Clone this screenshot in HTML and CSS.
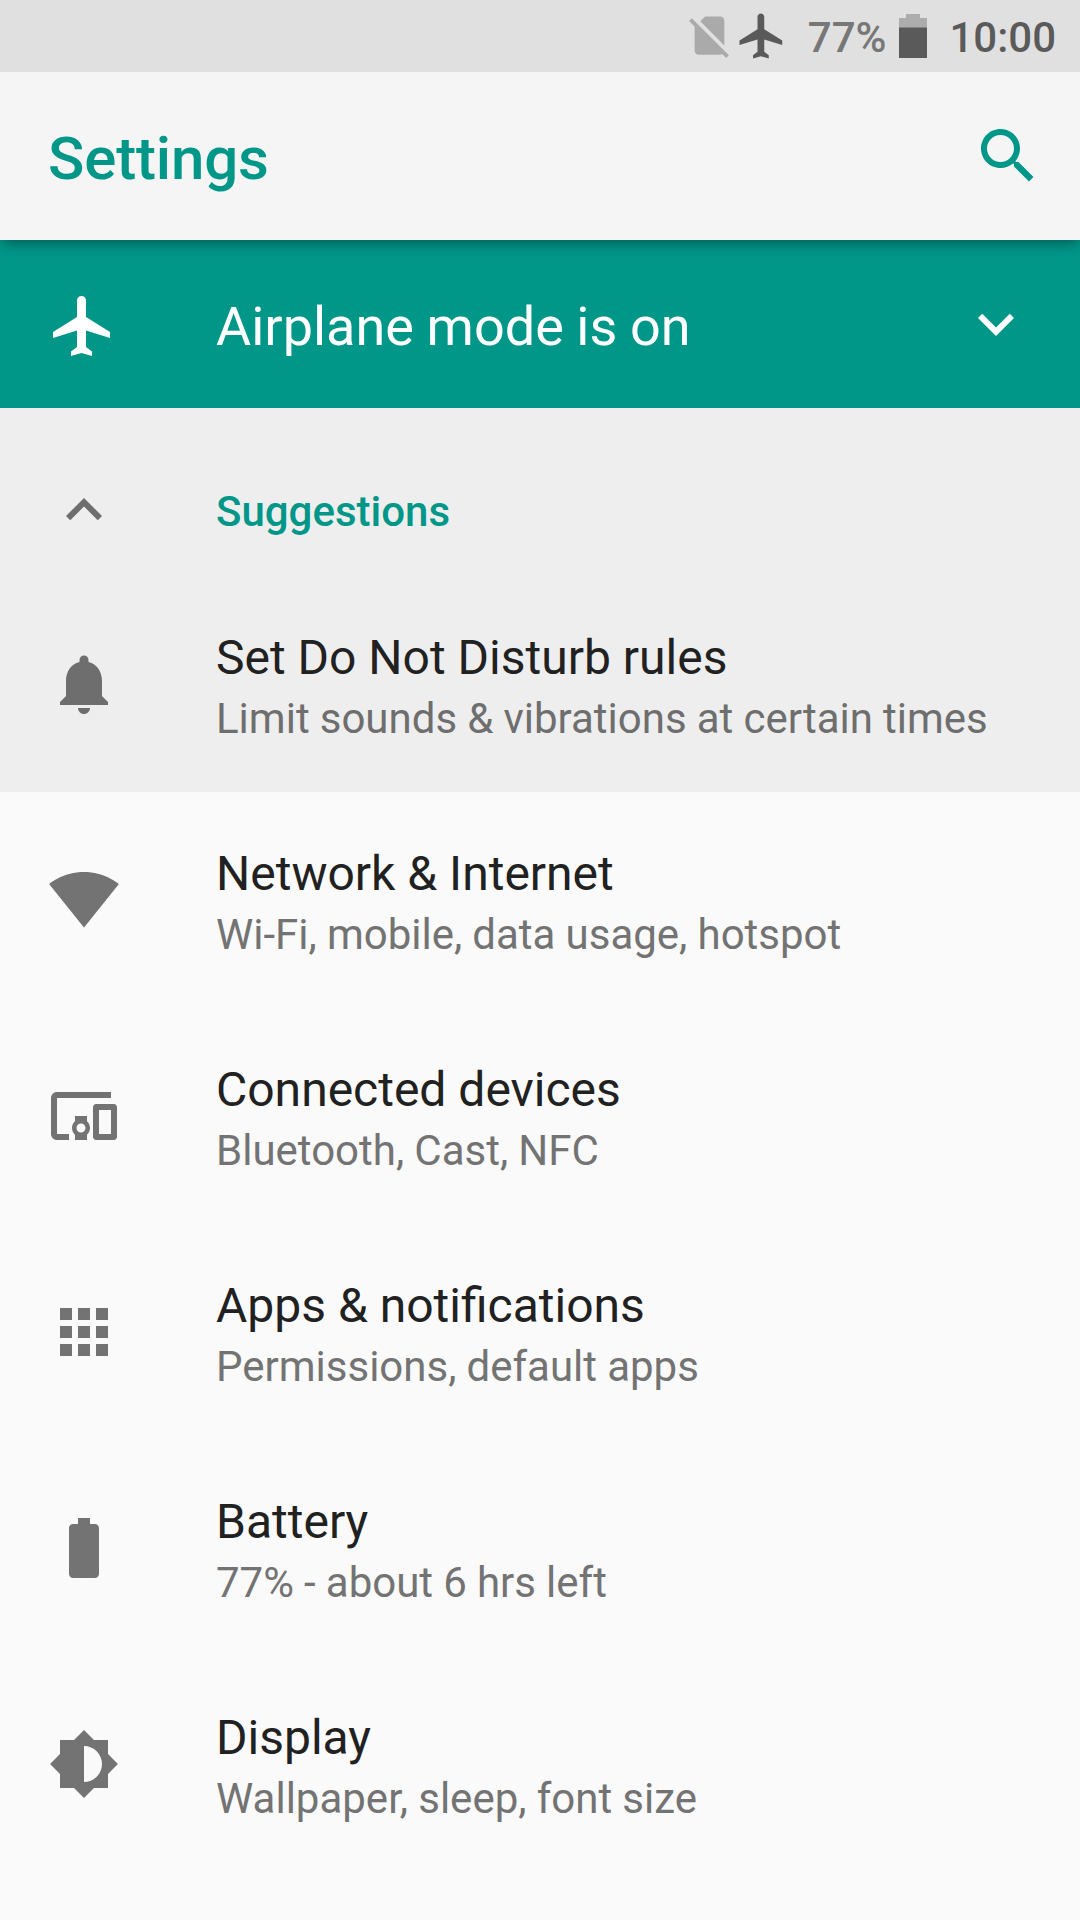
FILE: index.html
```html
<!DOCTYPE html>
<html lang="en">
<head>
<meta charset="utf-8">
<title>Settings</title>
<link rel="stylesheet" href="styles.css">
</head>
<body>
<div class="screen">
  <div class="status-bar">
    <svg class="status-sim" viewBox="0 0 24 24"><path d="M18.99 5c0-1.1-.89-2-1.99-2h-7L7.66 5.34 19 16.68 18.99 5zM3.65 3.88L2.38 5.15 5 7.77V19c0 1.1.9 2 2 2h10.01c.35 0 .67-.1.96-.26l1.88 1.88 1.27-1.27L3.65 3.88z"/></svg>
    <svg class="status-plane" viewBox="0 0 24 24"><path d="M21 16v-2l-8-5V3.5c0-.83-.67-1.5-1.5-1.5S10 2.67 10 3.5V9l-8 5v2l8-2.5V19l-2 1.5V22l3.5-1 3.5 1v-1.5L13 19v-5.5l8 2.5z"/></svg>
    <span class="status-percent">77%</span>
    <svg class="status-battery" viewBox="0 0 28 44"><path class="battery-empty" d="M7 0h14v4h7v10H0V4h7z"/><path class="battery-charge" d="M0 13.5h28V44H0z"/></svg>
    <span class="status-clock">10:00</span>
  </div>

  <header class="app-bar">
    <h1 class="app-title">Settings</h1>
    <svg class="icon search" viewBox="0 0 24 24"><path d="M15.5 14h-.79l-.28-.27C15.41 12.59 16 11.11 16 9.5 16 5.91 13.09 3 9.5 3S3 5.91 3 9.5 5.91 16 9.5 16c1.61 0 3.09-.59 4.23-1.57l.27.28v.79l5 4.99L20.49 19l-4.99-5zm-6 0C7.01 14 5 11.99 5 9.5S7.01 5 9.5 5 14 7.01 14 9.5 11.99 14 9.5 14z"/></svg>
  </header>

  <section class="banner">
    <svg class="icon banner-plane" viewBox="0 0 24 24"><path d="M21 16v-2l-8-5V3.5c0-.83-.67-1.5-1.5-1.5S10 2.67 10 3.5V9l-8 5v2l8-2.5V19l-2 1.5V22l3.5-1 3.5 1v-1.5L13 19v-5.5l8 2.5z"/></svg>
    <span class="banner-text">Airplane mode is on</span>
    <svg class="icon" viewBox="0 0 24 24"><path d="M16.59 8.59L12 13.17 7.41 8.59 6 10l6 6 6-6z"/></svg>
  </section>

  <section class="suggestions">
    <div class="suggestions-header">
      <svg class="icon" viewBox="0 0 24 24"><path d="M12 8l-6 6 1.41 1.41L12 10.83l4.59 4.58L18 14z"/></svg>
      <h2 class="suggestions-title">Suggestions</h2>
    </div>
    <div class="row">
      <svg class="icon" viewBox="0 0 24 24"><path d="M12 22c1.1 0 2-.9 2-2h-4c0 1.1.89 2 2 2zm6-6v-5c0-3.07-1.64-5.64-4.5-6.32V4c0-.83-.67-1.5-1.5-1.5s-1.5.67-1.5 1.5v.68C7.63 5.36 6 7.92 6 11v5l-2 2v1h16v-1l-2-2z"/></svg>
      <div class="row-text"><div class="row-title">Set Do Not Disturb rules</div><div class="row-summary">Limit sounds &amp; vibrations at certain times</div></div>
    </div>
  </section>

  <main class="categories">
    <div class="row">
      <svg class="icon" viewBox="0 0 24 24"><path d="M12.01 21.2L23.64 6.7c-.45-.34-4.93-4-11.64-4C5.28 2.7.81 6.36.36 6.7l11.63 14.49.01.01.01-.01z"/></svg>
      <div class="row-text"><div class="row-title">Network &amp; Internet</div><div class="row-summary">Wi-Fi, mobile, data usage, hotspot</div></div>
    </div>
    <div class="row">
      <svg class="icon" viewBox="0 0 24 24"><path d="M3 6h18V4H3c-1.1 0-2 .9-2 2v12c0 1.1.9 2 2 2h4v-2H3V6zm10 6H9v1.78c-.61.55-1 1.33-1 2.22s.39 1.67 1 2.22V20h4v-1.78c.61-.55 1-1.34 1-2.22s-.39-1.67-1-2.22V12zm-2 5.5c-.83 0-1.5-.67-1.5-1.5s.67-1.5 1.5-1.5 1.5.67 1.5 1.5-.67 1.5-1.5 1.5zM22 8h-6c-.5 0-1 .5-1 1v10c0 .5.5 1 1 1h6c.5 0 1-.5 1-1V9c0-.5-.5-1-1-1zm-1 10h-4v-8h4v8z"/></svg>
      <div class="row-text"><div class="row-title">Connected devices</div><div class="row-summary">Bluetooth, Cast, NFC</div></div>
    </div>
    <div class="row">
      <svg class="icon" viewBox="0 0 24 24"><path d="M4 8h4V4H4v4zm6 12h4v-4h-4v4zm-6 0h4v-4H4v4zm0-6h4v-4H4v4zm6 0h4v-4h-4v4zm6-10v4h4V4h-4zm-6 4h4V4h-4v4zm6 6h4v-4h-4v4zm0 6h4v-4h-4v4z"/></svg>
      <div class="row-text"><div class="row-title">Apps &amp; notifications</div><div class="row-summary">Permissions, default apps</div></div>
    </div>
    <div class="row">
      <svg class="icon" viewBox="0 0 24 24"><path d="M15.67 4H14V2h-4v2H8.33C7.6 4 7 4.6 7 5.33v15.33C7 21.4 7.6 22 8.33 22h7.33c.74 0 1.34-.6 1.34-1.33V5.33C17 4.6 16.4 4 15.67 4z"/></svg>
      <div class="row-text"><div class="row-title">Battery</div><div class="row-summary">77% - about 6 hrs left</div></div>
    </div>
    <div class="row">
      <svg class="icon" viewBox="0 0 24 24"><path d="M20 15.31L23.31 12 20 8.69V4h-4.69L12 .69 8.69 4H4v4.69L.69 12 4 15.31V20h4.69L12 23.31 15.31 20H20v-4.69zM12 18V6c3.31 0 6 2.69 6 6s-2.69 6-6 6z"/></svg>
      <div class="row-text"><div class="row-title">Display</div><div class="row-summary">Wallpaper, sleep, font size</div></div>
    </div>
  </main>
</div>
</body>
</html>
```
FILE: styles.css
```css
* {
  box-sizing: border-box;
}

body {
  margin: 0;
  background: #fafafa;
  font-family: Roboto, sans-serif;
  color: #212121;
}

h1,
h2 {
  margin: 0;
  font-weight: 500;
}

.screen {
  width: 1080px;
  height: 1920px;
  overflow: hidden;
}

.icon {
  display: block;
  flex: none;
  width: 72px;
  height: 72px;
  fill: currentColor;
}

/* Status bar */
.status-bar {
  position: relative;
  z-index: 2;
  display: flex;
  align-items: center;
  justify-content: flex-end;
  height: 72px;
  padding-right: 24px;
  background: #e0e0e0;
  font-size: 42px;
  font-weight: 500;
  line-height: 68px;
}

.status-sim {
  width: 51px;
  height: 51px;
  margin-bottom: 2px;
  fill: #aaa;
}

.status-plane {
  width: 54px;
  height: 54px;
  fill: #5a5a5a;
}

.status-percent {
  margin-left: 19px;
  padding-top: 4px;
  color: #777;
}

.status-battery {
  width: 28px;
  height: 44px;
  margin-left: 13px;
}

.battery-empty {
  fill: #adadad;
}

.battery-charge {
  fill: #5a5a5a;
}

.status-clock {
  margin-left: 22px;
  padding-top: 4px;
  color: #5a5a5a;
}

/* App bar */
.app-bar {
  position: relative;
  z-index: 1;
  display: flex;
  align-items: center;
  justify-content: space-between;
  height: 168px;
  padding: 0 36px 0 48px;
  background: #f5f5f5;
  color: #009688;
  box-shadow: 0 5px 12px -2px rgba(0, 0, 0, 0.4);
}

.app-title {
  padding-top: 6px;
  font-size: 60px;
  letter-spacing: -0.15px;
  line-height: 70px;
}

/* Airplane mode banner */
.banner {
  display: flex;
  align-items: center;
  height: 168px;
  padding: 0 48px;
  background: #009688;
  color: #fff;
}

.banner-plane {
  margin: 4px 1px 0 -1px;
}

.banner-text {
  flex: 1;
  padding: 6px 0 0 96px;
  font-size: 54px;
  line-height: 64px;
  word-spacing: -0.8px;
}

/* Suggestions */
.suggestions {
  background: #eee;
}

.suggestions-header {
  display: flex;
  align-items: center;
  gap: 96px;
  height: 168px;
  padding: 36px 48px 0;
  color: #6e6e6e;
}

.suggestions-title {
  padding-top: 4px;
  font-size: 42px;
  line-height: 50px;
  color: #009688;
}

/* Rows */
.row {
  display: flex;
  align-items: center;
  gap: 96px;
  height: 216px;
  padding: 0 48px;
  color: #737373;
}

.suggestions .row {
  color: #6e6e6e;
}

.row-text {
  padding-top: 5px;
  white-space: nowrap;
}

.row-title {
  font-size: 48px;
  line-height: 64px;
  color: #212121;
}

.row-summary {
  font-size: 42px;
  line-height: 58px;
  word-spacing: -0.3px;
}
```
